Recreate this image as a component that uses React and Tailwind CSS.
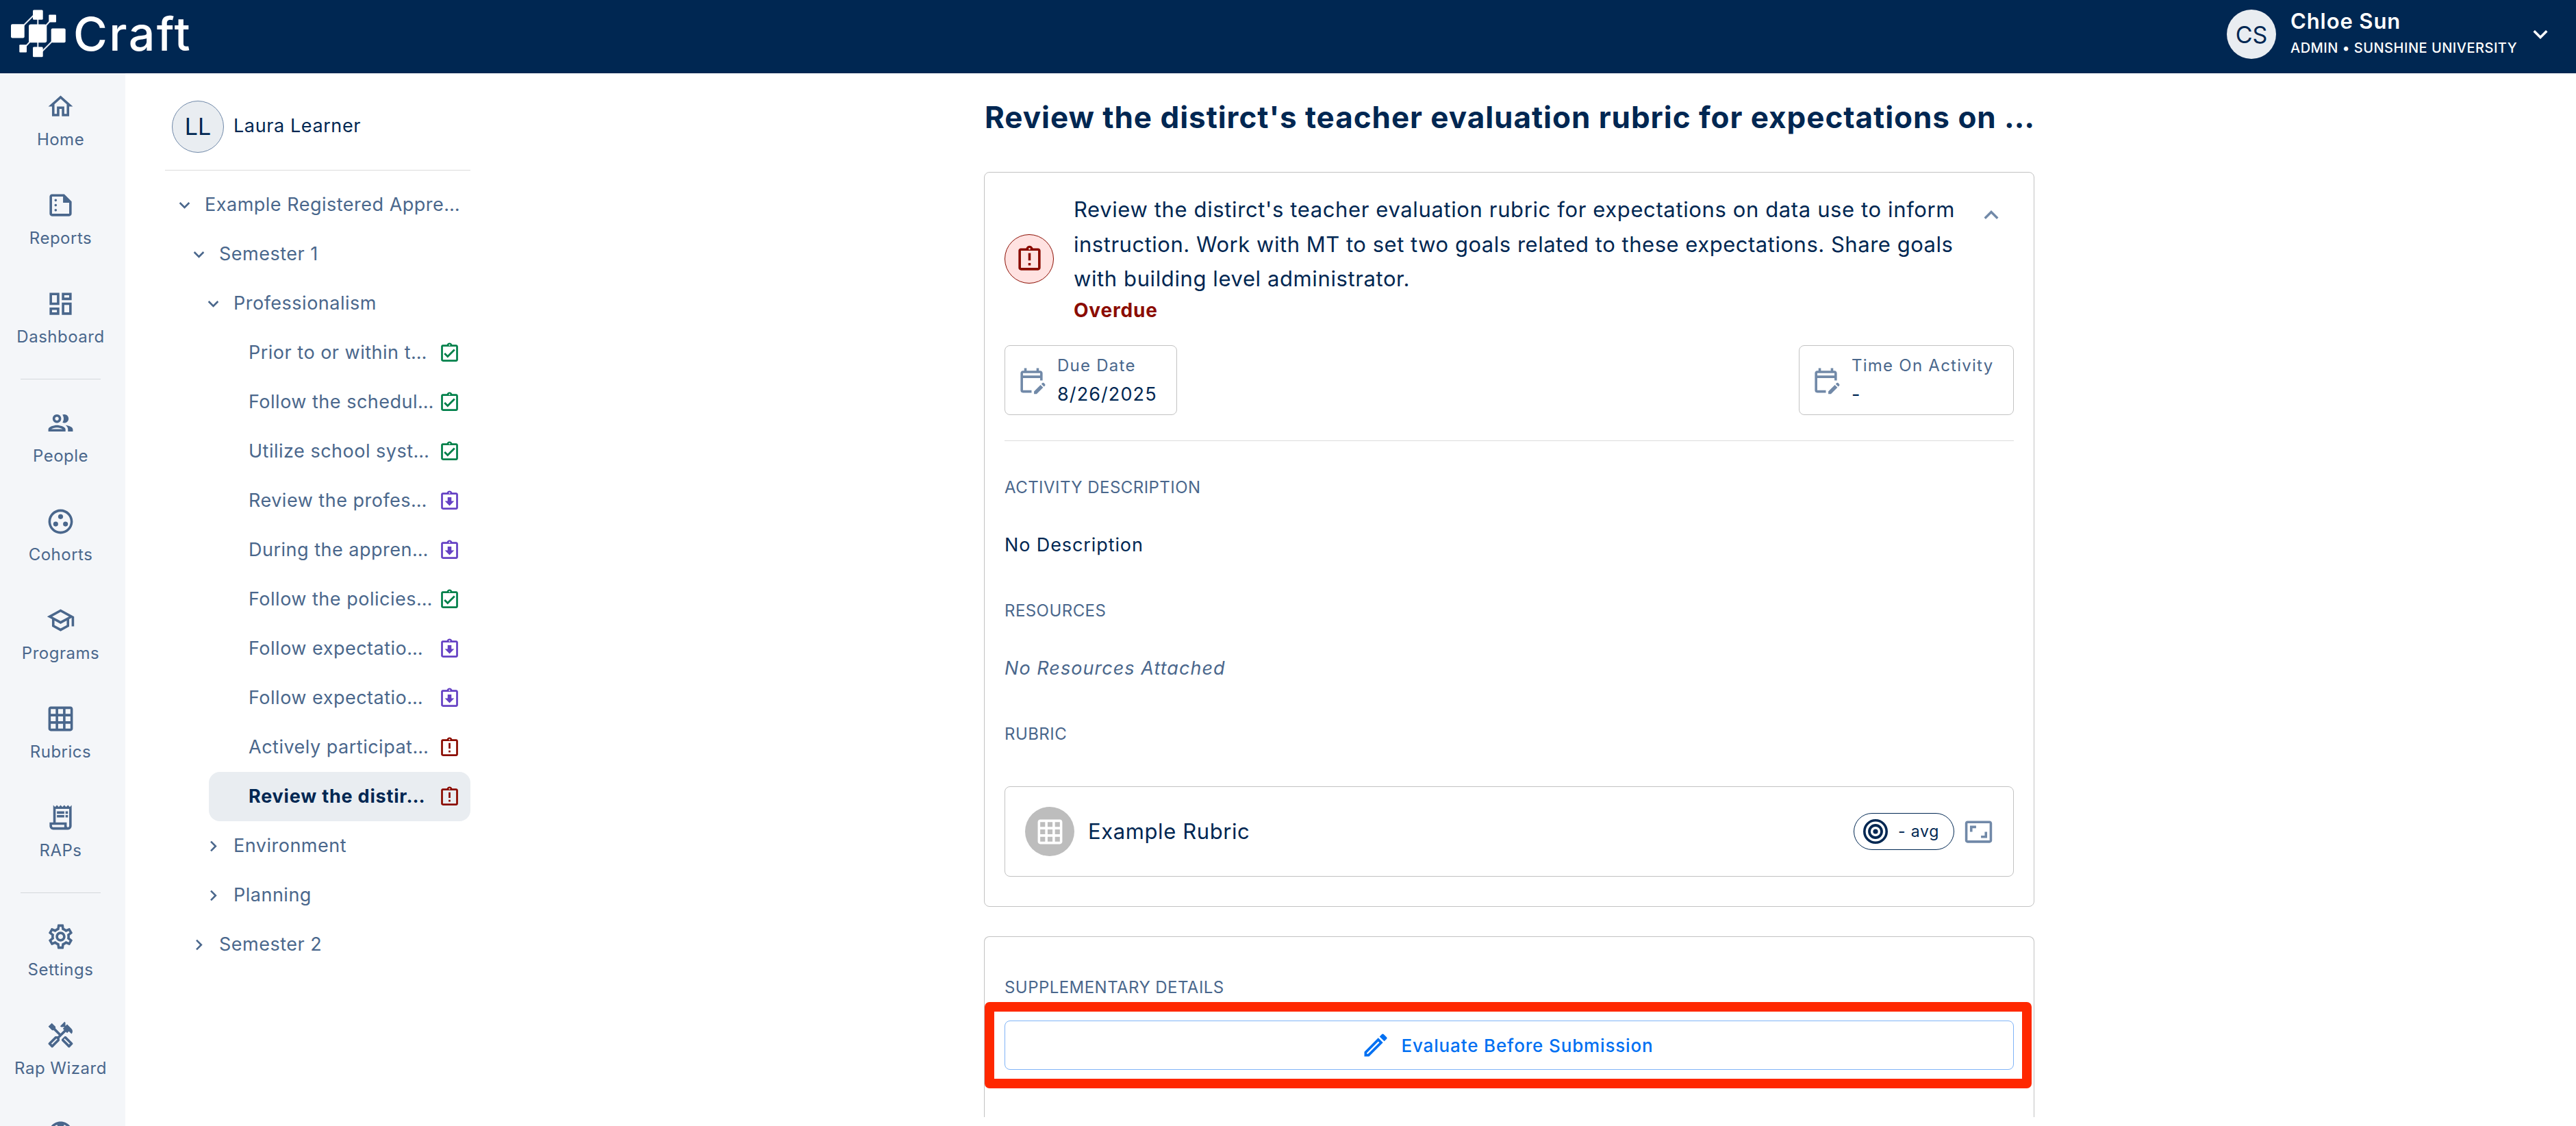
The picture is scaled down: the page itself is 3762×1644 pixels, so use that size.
import React from "react";
import {
  MdOutlineHome,
  MdOutlineSummarize,
  MdOutlineDashboard,
  MdOutlineGroup,
  MdOutlineGroupWork,
  MdOutlineSchool,
  MdGridOn,
  MdOutlineReceiptLong,
  MdOutlineSettings,
  MdOutlineHandyman,
  MdOutlineSupport,
  MdOutlineAssignmentTurnedIn,
  MdOutlineAssignmentReturned,
  MdOutlineAssignmentLate,
  MdOutlineEditCalendar,
  MdOutlineEdit,
  MdAspectRatio,
  MdExpandMore,
  MdExpandLess,
  MdChevronRight,
} from "react-icons/md";

const navGroups = [
  [
    ["Home", MdOutlineHome],
    ["Reports", MdOutlineSummarize],
    ["Dashboard", MdOutlineDashboard],
  ],
  [
    ["People", MdOutlineGroup],
    ["Cohorts", MdOutlineGroupWork],
    ["Programs", MdOutlineSchool],
    ["Rubrics", MdGridOn],
    ["RAPs", MdOutlineReceiptLong],
  ],
  [
    ["Settings", MdOutlineSettings],
    ["Rap Wizard", MdOutlineHandyman],
    ["", MdOutlineSupport],
  ],
];

const tree = [
  { level: 0, label: "Example Registered Appre…", open: true },
  { level: 1, label: "Semester 1", open: true },
  { level: 2, label: "Professionalism", open: true },
  { level: 3, label: "Prior to or within t…", status: "done" },
  { level: 3, label: "Follow the schedul…", status: "done" },
  { level: 3, label: "Utilize school syst…", status: "done" },
  { level: 3, label: "Review the profes…", status: "returned" },
  { level: 3, label: "During the appren…", status: "returned" },
  { level: 3, label: "Follow the policies…", status: "done" },
  { level: 3, label: "Follow expectatio…", status: "returned" },
  { level: 3, label: "Follow expectatio…", status: "returned" },
  { level: 3, label: "Actively participat…", status: "late" },
  { level: 3, label: "Review the distir…", status: "late", selected: true },
  { level: 2, label: "Environment", open: false },
  { level: 2, label: "Planning", open: false },
  { level: 1, label: "Semester 2", open: false },
];

const indents = ["ml-0", "ml-[21px]", "ml-[42px]", "ml-[64px]"];

const statusIcons = {
  done: <MdOutlineAssignmentTurnedIn className="size-[33px] shrink-0 text-[#00804a]" />,
  returned: <MdOutlineAssignmentReturned className="size-[33px] shrink-0 text-[#6541c4]" />,
  late: <MdOutlineAssignmentLate className="size-[33px] shrink-0 text-[#8b0c00]" />,
};

function Logo() {
  return (
    <div className="flex items-center">
      <svg className="h-[70px] w-[80px]" viewBox="16 14.5 80 70" fill="#fff" stroke="none">
        <g stroke="#e6ebf2" strokeWidth="2">
          <path d="M34 38L50 22M55.3 28v10M76 28l-10 11M55.3 60v10M34 72l11-12M60 77l18-18" />
        </g>
        <rect x="48" y="15" width="14.7" height="14.3" rx="1.5" />
        <rect x="71.3" y="22" width="10.7" height="11" rx="1" />
        <rect x="16" y="35.7" width="19.7" height="20.3" rx="2" />
        <rect x="42" y="36" width="26.3" height="26.7" rx="3" />
        <rect x="74.7" y="42" width="21" height="20.7" rx="2" />
        <rect x="28.3" y="65.7" width="10.7" height="11.3" rx="1" />
        <rect x="48" y="69" width="14.7" height="14.7" rx="1.5" />
      </svg>
      <span className="ml-[11px] text-[68px] leading-[70px] font-medium tracking-[2.4px] text-white">Craft</span>
    </div>
  );
}

function Header() {
  return (
    <header className="flex h-[107px] shrink-0 justify-between bg-[#002752] pr-[31px] pl-4">
      <div className="pt-[14px]">
        <Logo />
      </div>
      <div className="flex h-[100px] items-center text-white">
        <div className="flex size-[72px] items-center justify-center rounded-full bg-[#e9edf1] text-[34px] text-[#002752]">CS</div>
        <div className="ml-[21px] flex w-[344px] flex-col pt-[2px]">
          <span className="text-[31px] leading-[38px] font-semibold tracking-[0.9px]">Chloe Sun</span>
          <span className="text-[20px] leading-[40px] font-medium tracking-[0.5px] whitespace-nowrap">ADMIN • SUNSHINE UNIVERSITY</span>
        </div>
        <MdExpandMore className="size-[42px]" />
      </div>
    </header>
  );
}

function SideNav() {
  return (
    <nav className="flex w-[183px] shrink-0 flex-col bg-[#f4f6f9] pt-[2px] pr-[6px] text-[#4a678c]">
      {navGroups.map((group, g) => (
        <React.Fragment key={g}>
          {g > 0 && <div className="mx-[30px] mt-3 mb-[17px] h-px shrink-0 bg-[#d5d8dc]" />}
          {group.map(([label, Icon], i) => (
            <div key={i} className="flex h-36 shrink-0 flex-col items-center gap-3 pt-[25px]">
              <Icon className="size-[43px] shrink-0" />
              {label && <span className="text-[24px] leading-[30px] tracking-[0.5px] whitespace-nowrap">{label}</span>}
            </div>
          ))}
        </React.Fragment>
      ))}
    </nav>
  );
}

function TreeRow({ node }) {
  const Chevron = node.open ? MdExpandMore : MdChevronRight;
  return (
    <div
      className={`flex h-[72px] shrink-0 items-center rounded-2xl pr-[14px] ${indents[node.level]} ${
        node.selected ? "bg-[#e9edf1] font-bold tracking-[0.8px] text-[#002752]" : "tracking-[0.5px] text-[#4a678c]"
      }`}
    >
      <span className="flex w-[58px] shrink-0 pl-[13px]">{!node.status && <Chevron className="size-[31px]" />}</span>
      <span className="grow text-[27px] whitespace-nowrap">{node.label}</span>
      {node.status && statusIcons[node.status]}
    </div>
  );
}

function Outline() {
  return (
    <aside className="ml-[58px] flex w-[446px] shrink-0 flex-col">
      <div className="flex h-[142px] shrink-0 items-center border-b border-[#dcdcdc] pt-[14px] pl-[10px]">
        <div className="flex size-[76px] items-center justify-center rounded-full border border-[#6f88a8] bg-[#e9edf1] text-[34px] text-[#002752]">
          LL
        </div>
        <span className="ml-[14px] text-[27px] tracking-[0.6px] text-[#002752]">Laura Learner</span>
      </div>
      <div className="flex flex-col pt-[14px]">
        {tree.map((node, i) => (
          <TreeRow key={i} node={node} />
        ))}
      </div>
    </aside>
  );
}

function InfoBox({ label, value, className }) {
  return (
    <div className={`flex h-[102px] items-center rounded-lg border border-[#c2c2c2] pl-[17px] ${className}`}>
      <MdOutlineEditCalendar className="size-[43px] text-[#7189a8]" />
      <div className="ml-[16px] flex flex-col">
        <span className="text-[24px] leading-[42px] tracking-[1.25px] text-[#4a678c]">{label}</span>
        <span className="text-[27px] leading-[42px] tracking-[1.1px] text-[#002752]">{value}</span>
      </div>
    </div>
  );
}

function SectionLabel({ children, className = "" }) {
  return <div className={`h-9 text-[24px] leading-9 tracking-[0.45px] text-[#4a678c] ${className}`}>{children}</div>;
}

function ActivityCard() {
  return (
    <section className="flex h-[1073px] shrink-0 flex-col rounded-lg border border-[#c2c2c2] px-[29px] pt-[29px]">
      <div className="flex h-[192px] items-center">
        <div className="mt-[2px] flex size-[72px] shrink-0 items-center justify-center rounded-full border border-[#8b0c00] bg-[#ffe2e1]">
          <MdOutlineAssignmentLate className="size-[43px] text-[#8b0c00]" />
        </div>
        <div className="ml-[29px] flex w-[1310px] flex-col">
          <p className="text-[31px] leading-[50.5px] tracking-[0.6px] whitespace-nowrap text-[#002752]">
            <span className="tracking-[0.62px]">Review the distirct's teacher evaluation rubric for expectations on data use to inform</span>
            <br />
            <span className="tracking-[0.52px]">instruction. Work with MT to set two goals related to these expectations. Share goals</span>
            <br />
            with building level administrator.
          </p>
          <span className="text-[28px] leading-10 font-bold tracking-[0.8px] text-[#8b0c00]">Overdue</span>
        </div>
        <MdExpandLess className="mt-3 ml-[9px] size-[42px] self-start text-[#7189a8]" />
      </div>
      <div className="mt-[31px] flex justify-between">
        <InfoBox label="Due Date" value="8/26/2025" className="w-[252px]" />
        <InfoBox label="Time On Activity" value="-" className="w-[314px]" />
      </div>
      <div className="mt-[37px] h-px bg-[#dcdcdc]" />
      <SectionLabel className="mt-[50px]">ACTIVITY DESCRIPTION</SectionLabel>
      <div className="mt-[48px] h-9 text-[27px] leading-9 tracking-[0.9px] text-[#002752]">No Description</div>
      <SectionLabel className="mt-[60px]">RESOURCES</SectionLabel>
      <div className="mt-[48px] h-9 text-[27px] leading-9 tracking-[1.05px] text-[#4a678c] italic">No Resources Attached</div>
      <SectionLabel className="mt-[60px]">RUBRIC</SectionLabel>
      <div className="mt-[58px] flex h-[132px] items-center rounded-lg border border-[#c2c2c2] pr-[29px] pl-[29px]">
        <div className="flex size-[72px] items-center justify-center rounded-full bg-[#bdbdbd]">
          <MdGridOn className="size-[43px] text-white" />
        </div>
        <span className="ml-[20px] grow text-[31px] tracking-[0.6px] text-[#002752]">Example Rubric</span>
        <div className="flex h-[54px] w-[147px] items-center rounded-full border border-[#002752] pl-[13px] text-[#002752]">
          <svg className="size-9" viewBox="0 0 36 36" fill="none" stroke="currentColor">
            <circle cx="18" cy="18" r="16.2" strokeWidth="3.6" />
            <circle cx="18" cy="18" r="9" strokeWidth="3.8" />
            <circle cx="18" cy="18" r="3.6" fill="currentColor" stroke="none" />
          </svg>
          <span className="ml-[15px] text-[23px] tracking-[0.8px]">- avg</span>
        </div>
        <MdAspectRatio className="ml-[14px] size-[43px] text-[#7189a8]" />
      </div>
    </section>
  );
}

function SupplementaryCard() {
  return (
    <section className="mt-[43px] flex h-[264px] shrink-0 flex-col rounded-t-lg border border-b-0 border-[#c2c2c2] px-[29px] pt-[56px]">
      <SectionLabel>SUPPLEMENTARY DETAILS</SectionLabel>
      <div className="relative mt-[30px]">
        <button className="flex h-[72px] w-full items-center justify-center gap-[15px] rounded-lg border border-[#80b4f7] pr-[6px] text-[#0070f2]">
          <MdOutlineEdit className="size-[44px]" />
          <span className="text-[26px] font-medium tracking-[0.85px]">Evaluate Before Submission</span>
        </button>
        <div className="pointer-events-none absolute -top-[27px] -right-[26px] -bottom-[27px] -left-[29px] rounded-[7px] border-[14px] border-[#ff2800]" />
      </div>
    </section>
  );
}

export default function App() {
  return (
    <div className="flex h-[1644px] w-[3762px] flex-col overflow-hidden bg-white font-['Inter',sans-serif]">
      <Header />
      <div className="flex h-[1537px]">
        <SideNav />
        <Outline />
        <main className="ml-[750px] flex w-[1534px] flex-col">
          <h1 className="h-[144px] pt-[34px] pl-[1px] text-[44px] leading-[60px] font-bold tracking-[0.97px] whitespace-nowrap text-[#002752]">
            Review the distirct's teacher evaluation rubric for expectations on …
          </h1>
          <ActivityCard />
          <SupplementaryCard />
        </main>
      </div>
    </div>
  );
}
